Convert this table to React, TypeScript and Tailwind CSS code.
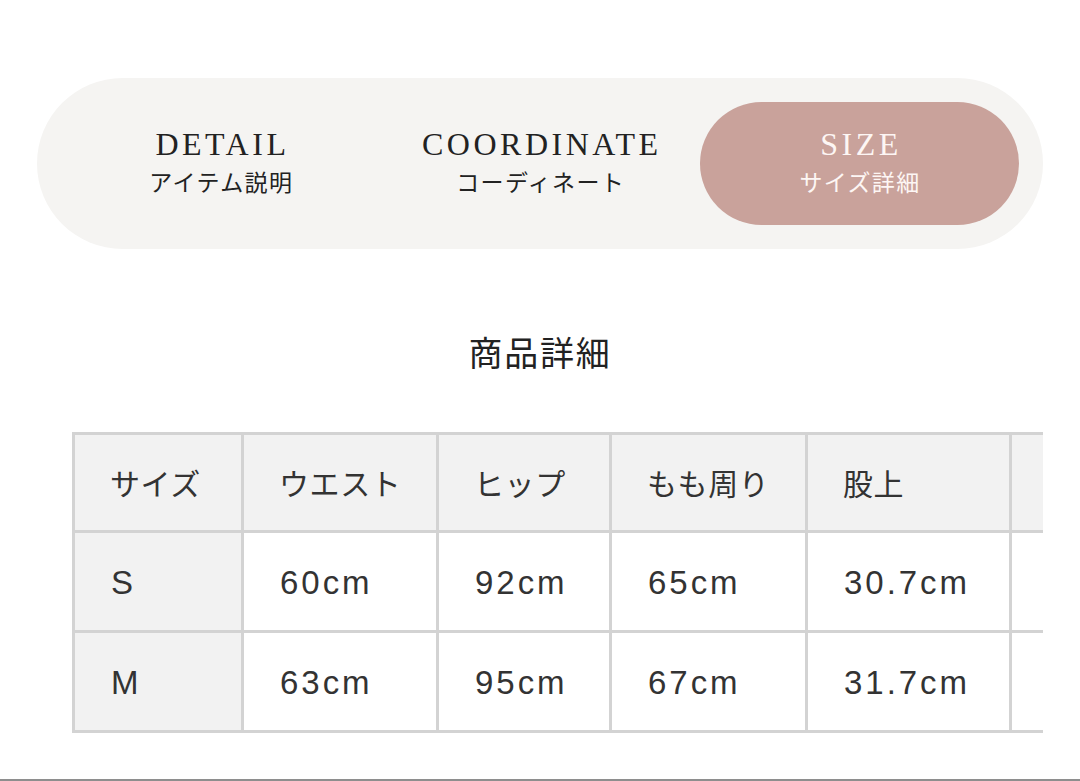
import React from 'react';

interface Tab {
  title: string;
  sub: string;
  active?: boolean;
}

const tabs: Tab[] = [
  { title: 'DETAIL', sub: 'アイテム説明' },
  { title: 'COORDINATE', sub: 'コーディネート' },
  { title: 'SIZE', sub: 'サイズ詳細', active: true },
];

// column widths incl. right border
const cols = ['w-[169px]', 'w-[195px]', 'w-[173px]', 'w-[196px]', 'w-[204px]', 'w-[200px]'];

const head = ['サイズ', 'ウエスト', 'ヒップ', 'もも周り', '股上', ''];
const rows: string[][] = [
  ['S', '60cm', '92cm', '65cm', '30.7cm', ''],
  ['M', '63cm', '95cm', '67cm', '31.7cm', ''],
];

const jp = "font-['Noto_Sans_CJK_JP',sans-serif]";
const num = "font-['Liberation_Sans','Noto_Sans_CJK_JP',sans-serif]";

export default function App() {
  return (
    <div className={`flex h-[781px] w-[1080px] flex-col overflow-hidden bg-white text-[#222] ${jp}`}>
      {/* tabs */}
      <div className="px-[37px] pt-[78px]">
        <nav className="grid grid-cols-3 rounded-full bg-[#f5f4f2] p-6">
          {tabs.map((t) => (
            <div
              key={t.title}
              className={
                'flex h-[123px] flex-col items-center justify-center rounded-full pb-[6px] ' +
                (t.active ? 'bg-[#c9a29b] text-[#fdf6f4]' : 'text-[#222]')
              }
            >
              <span className="font-['Liberation_Serif',serif] text-[32px] leading-[38px] tracking-[0.11em] pl-[0.11em]">
                {t.title}
              </span>
              <span className={`mt-[3px] text-[23px] leading-[30px] tracking-[0.06em] pl-[0.06em] ${jp}`}>
                {t.sub}
              </span>
            </div>
          ))}
        </nav>
      </div>

      <h2 className="mt-[77px] text-center text-[34px] leading-[51px] tracking-[0.05em] text-[#222]">
        商品詳細
      </h2>

      {/* size table */}
      <div className="ml-[72px] mt-[55px] w-[971px] overflow-hidden">
        <div className="w-max border-l-[3px] border-t-[3px] border-[#d3d3d3]">
          <div className="flex">
            {head.map((h, i) => (
              <div
                key={i}
                className={`flex h-[98px] items-center border-b-[3px] border-r-[3px] border-[#d3d3d3] bg-[#f2f2f2] pl-[35px] text-[30px] tracking-[0.02em] text-[#333] ${cols[i]}`}
              >
                {h}
              </div>
            ))}
          </div>
          {rows.map((r, ri) => (
            <div className="flex" key={ri}>
              {r.map((c, i) => (
                <div
                  key={i}
                  className={
                    `flex h-[100px] items-center border-b-[3px] border-r-[3px] border-[#d3d3d3] pl-[36px] pt-[2px] text-[33px] tracking-[0.09em] text-[#333] ${num} ${cols[i]} ` +
                    (i === 0 ? 'bg-[#f2f2f2]' : 'bg-white')
                  }
                >
                  {c}
                </div>
              ))}
            </div>
          ))}
        </div>
      </div>

      <div className="mt-auto h-[2px] bg-[#8e8e8e]" />
    </div>
  );
}
